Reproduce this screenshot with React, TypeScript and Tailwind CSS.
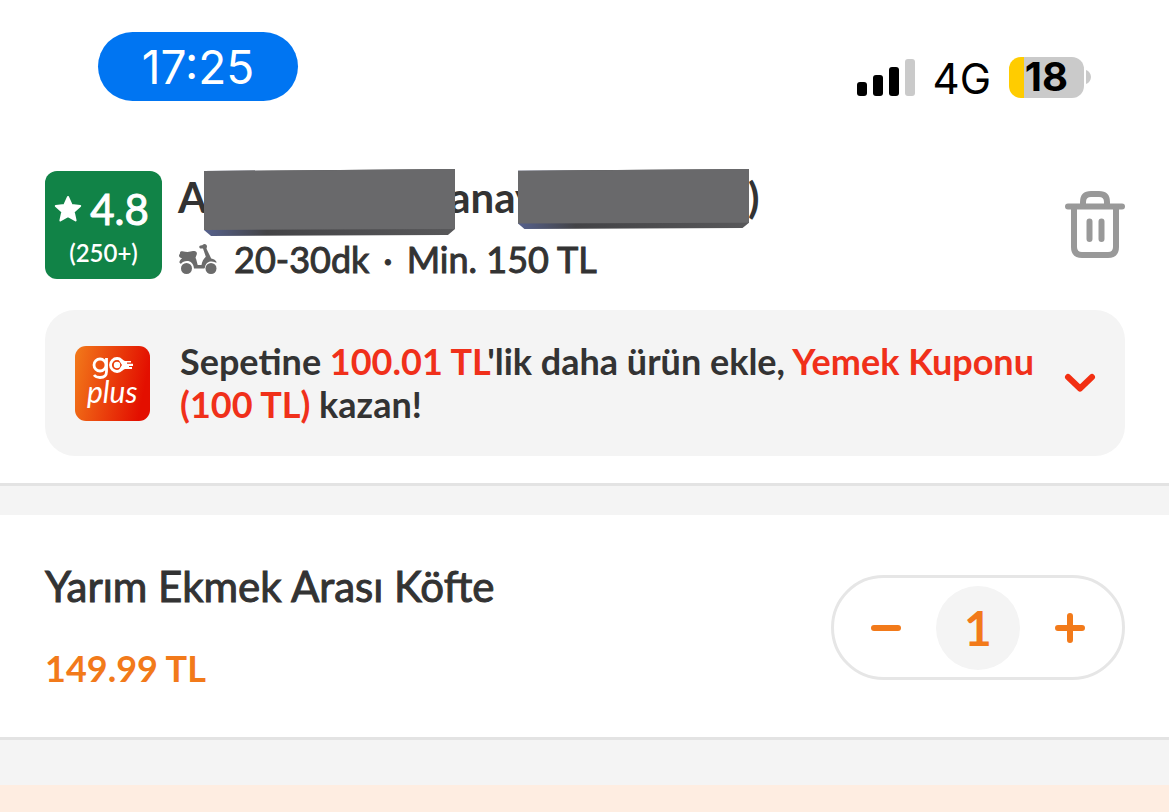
import React, {useState} from 'react';

function StatusBar() {
    return (
        <div className="flex items-start justify-between pl-[98px] pr-[78px] pt-8 text-black">
            <div className="flex h-[69px] w-[200px] items-center justify-center rounded-full bg-[#0075f2] font-['Inter'] text-[46px] leading-[68px] text-white">
                17:25
            </div>
            <div className="flex items-center pt-[21px] font-['Inter']">
                <svg width="58" height="37" viewBox="0 0 58 37" className="mr-[18px]" aria-hidden="true">
                    <rect x="0" y="23" width="10" height="14" rx="3" fill="#000"/>
                    <rect x="16" y="16" width="10" height="21" rx="3" fill="#000"/>
                    <rect x="32" y="8" width="10" height="29" rx="3" fill="#000"/>
                    <rect x="48" y="0" width="10" height="37" rx="3" fill="#cacaca"/>
                </svg>
                <span className="mr-[18px] pt-1 text-[42px] leading-[44px]">4G</span>
                <div className="flex h-[41px] w-[75px] items-center justify-center rounded-xl bg-linear-to-r from-[#ffcc00] from-[15px] to-[#cacaca] to-[15px] text-[40px] leading-[48px] font-bold">
                    18
                </div>
                <svg width="5" height="14" viewBox="0 0 5 14" className="ml-[2px]" aria-hidden="true">
                    <path d="M0 0c3 1 5 4 5 7s-2 6-5 7z" fill="#cacaca"/>
                </svg>
            </div>
        </div>
    )
}

function ScooterIcon() {
    return (
        <svg width="40" height="32" viewBox="0 0 40 32" aria-hidden="true">
            <g fill="#6b6b6b">
                <path d="M1 12.500C1 11.500 2 11 2 10.200 1.800 8.500 3 8 4.500 8.300c4 .9 7.500.7 10.500-.2 2.800-.7 4.300 1.200 3.800 3.200l-1.300 3.500c1.200 2.500 1.500 5 2.200 7.200h3.800c.6-3.600 2-6.300 4.300-8.300L25 5.500h-2.200c-1.700 0-2.200-2.600-.3-3 1 0 1.500-.2 2.300-.8C26.500.3 29 1.300 29 3.500c0 1-.6 1.600-.4 2.400l4.600 9.500c2.500.3 4.700 1.800 5.600 4-1.600.3-3-1.200-5.600-1-3.500 0-5.800 2.600-6.300 6-.1.700-.6 1-1.300 1H16c-.5-4.700-3.200-7.300-7-7.300-2.700 0-4.500 1-6 2.600-1.800-.2-2-1.800-1-3.300.7-1 1.500-1.700 2.300-2.300C2.800 15 1 14.300 1 12.500z"/>
                <circle cx="8.500" cy="25.500" r="5.500"/>
                <circle cx="33" cy="25.500" r="5.500"/>
            </g>
        </svg>
    )
}

function TrashIcon() {
    return (
        <svg width="60" height="68" viewBox="0 0 60 68" fill="none" stroke="#999" strokeWidth="6" strokeLinecap="round" aria-hidden="true">
            <path d="M3 15.500H57"/>
            <path d="M18 15V11q0-8 8-8h8q8 0 8 8v4"/>
            <path d="M9 16V56q0 8 8 8H43q8 0 8-8V16"/>
            <path d="M24.500 30.500V48M36.500 30.500V48"/>
        </svg>
    )
}

function Restaurant() {
    return (
        <div className="mt-[70px] flex items-start pl-[45px] pr-11">
            <div className="mr-4 flex h-[108px] w-[117px] shrink-0 flex-col items-center rounded-xl bg-[#118347] pt-[14px] text-white">
                <div className="flex items-center gap-2 pr-1">
                    <svg width="28" height="28" viewBox="0 0 28 28" aria-hidden="true">
                        <path d="M14 2l3.600 8 8.600.9-6.500 5.900 1.900 8.700L14 21.100l-7.600 4.400 1.900-8.700L1.800 10.900l8.600-.9z" fill="#fff" stroke="#fff" strokeWidth="2" strokeLinejoin="round"/>
                    </svg>
                    <span className="text-[42px] leading-[48px] [-webkit-text-stroke-width:1px]">4.8</span>
                </div>
                <span className="text-2xl leading-[40px] font-semibold">(250+)</span>
            </div>
            <div className="grow">
                <h1 className="flex h-[64px] items-start text-[42px] leading-[52px] font-bold">
                    <span>A</span>
                    <Censor className="-ml-[3px] h-[67px] w-[251px]"/>
                    <span className="-ml-[6px]">anay</span>
                    <Censor className="-ml-[19px] h-[60px] w-[231px]"/>
                    <span className="-ml-px">)</span>
                </h1>
                <p className="flex h-12 items-center text-4xl leading-[48px] [-webkit-text-stroke-width:1px]">
                    <span className="mr-4"><ScooterIcon/></span>
                    <span>20-30dk</span>
                    <span className="mx-[14px]">·</span>
                    <span>Min. 150 TL</span>
                </p>
            </div>
            <button type="button" aria-label="Sepeti sil" className="mt-5 shrink-0">
                <TrashIcon/>
            </button>
        </div>
    )
}

function Censor({className}: {className: string}) {
    return (
        <svg viewBox="0 0 250 66" preserveAspectRatio="none" className={`relative -mt-[2px] shrink-0 ${className}`} aria-hidden="true">
            <defs>
                <linearGradient id="censorEdge">
                    <stop offset="0" stopColor="#56618c"/>
                    <stop offset=".25" stopColor="#434346"/>
                    <stop offset="1" stopColor="#58585a"/>
                </linearGradient>
            </defs>
            <path d="M0 2L250 0V59L243 65L7 66L0 60z" fill="url(#censorEdge)"/>
            <path d="M0 2L250 0V59L0 60z" fill="#69696b"/>
        </svg>
    )
}

function GoPlusLogo() {
    return (
        <svg width="75" height="75" viewBox="0 0 75 75" className="shrink-0" role="img" aria-label="go plus">
            <defs>
                <linearGradient id="goplus" x1="0" y1="0" x2="1" y2=".2">
                    <stop offset="0" stopColor="#f27a1a"/>
                    <stop offset="1" stopColor="#e30f00"/>
                </linearGradient>
            </defs>
            <rect width="75" height="75" rx="11" fill="url(#goplus)"/>
            <g fill="none" stroke="#fff" strokeWidth="2.800">
                <circle cx="25" cy="19" r="6"/>
                <path d="M31.500 12V25.500q0 6-6.500 6-4 0-6-2.500"/>
                <circle cx="42" cy="19" r="6.500"/>
            </g>
            <circle cx="42" cy="19" r="3.200" fill="#fff"/>
            <path d="M42 11.300l8 3.700h6v1.600h-4v1.200h6v2.200h-4v1h3v2h-7l-8 3.700 5-7.700z" fill="#fff"/>
            <text x="12" y="57" fill="#fff" fontFamily="Lato" fontStyle="italic" fontSize="30">plus</text>
        </svg>
    )
}

function Coupon() {
    return (
        <div className="mt-[27px] mr-11 ml-[45px] flex items-center rounded-[30px] bg-[#f4f4f4] py-[30px] pr-[28px] pl-[30px]">
            <GoPlusLogo/>
            <p className="ml-[30px] grow text-4xl leading-[43px] font-bold">
                Sepetine <span className="text-[#f0301a]">100.01 TL</span>'lik daha ürün ekle,{' '}
                <span className="text-[#f0301a]">Yemek Kuponu (100 TL)</span> kazan!
            </p>
            <button type="button" aria-label="Detay" className="ml-5 shrink-0">
                <svg width="34" height="22" viewBox="0 0 34 22" fill="none" stroke="#f22f12" strokeWidth="6" strokeLinecap="round" strokeLinejoin="round" aria-hidden="true">
                    <path d="M5 5L17 16.500 29 5"/>
                </svg>
            </button>
        </div>
    )
}

function CartItem() {
    const [count, setCount] = useState<number>(1);

    return (
        <div className="flex h-[222px] items-center justify-between pl-[45px] pr-11">
            <div>
                <h2 className="text-[42px] leading-[52px] [-webkit-text-stroke-width:1px]">Yarım Ekmek Arası Köfte</h2>
                <p className="mt-8 text-4xl leading-[48px] font-bold text-[#f27a1a]">149.99 TL</p>
            </div>
            <div className="mt-[3px] flex h-[105px] w-[294px] items-center justify-between rounded-full border-3 border-[#e6e6e6] px-[36px] text-[#f27a1a]">
                <button type="button" aria-label="Azalt" onClick={() => setCount(Math.max(0, count - 1))}>
                    <svg width="32" height="32" viewBox="0 0 32 32" stroke="currentColor" strokeWidth="6" strokeLinecap="round" aria-hidden="true">
                        <path d="M4 16H28"/>
                    </svg>
                </button>
                <span className="flex size-[84px] items-center justify-center rounded-full bg-[#f4f4f4] text-5xl font-bold">
                    {count}
                </span>
                <button type="button" aria-label="Arttır" onClick={() => setCount(count + 1)}>
                    <svg width="32" height="32" viewBox="0 0 32 32" stroke="currentColor" strokeWidth="6" strokeLinecap="round" aria-hidden="true">
                        <path d="M4 16H28M16 4V28"/>
                    </svg>
                </button>
            </div>
        </div>
    )
}

function App() {
    return (
        <div className="flex min-h-screen flex-col bg-white font-['Lato',sans-serif] text-[#333]">
            <StatusBar/>
            <Restaurant/>
            <Coupon/>
            <div className="mt-[27px] h-8 border-t-3 border-[#e3e3e3] bg-[#f4f4f4]"/>
            <CartItem/>
            <div className="h-12 border-t-3 border-[#e3e3e3] bg-[#f4f4f4]"/>
            <div className="min-h-[26px] grow bg-[#feede1]"/>
        </div>
    )
}

export default App;
